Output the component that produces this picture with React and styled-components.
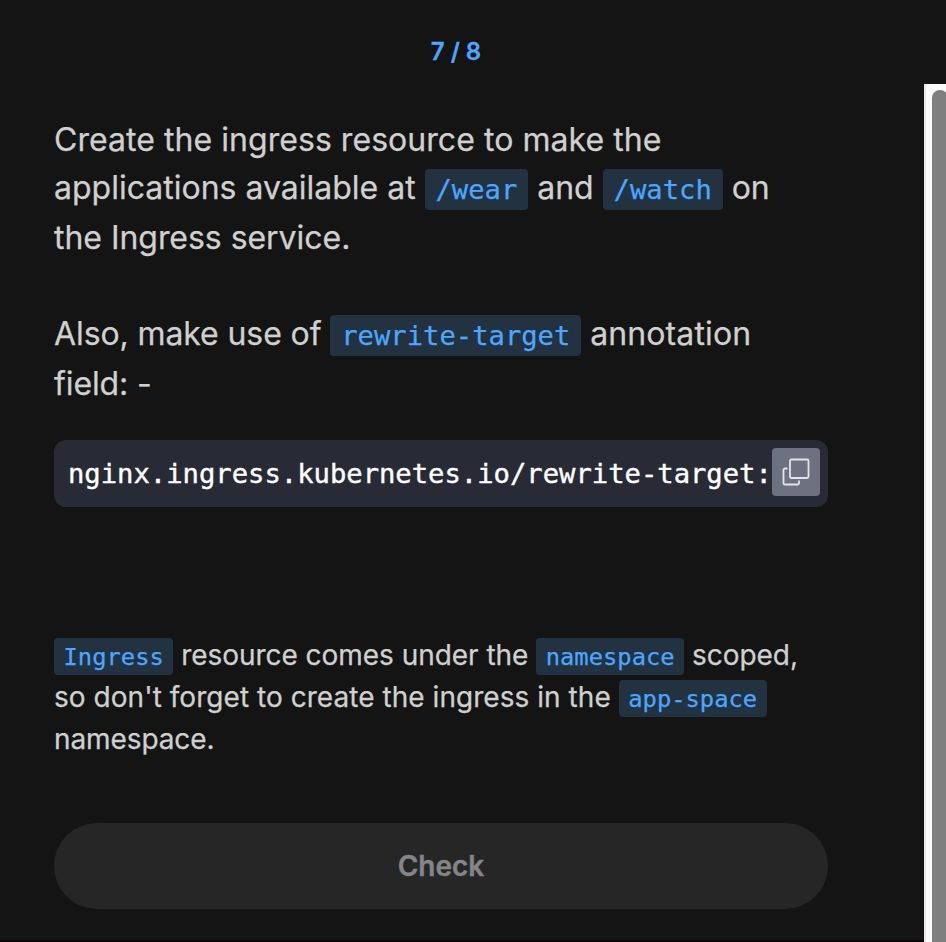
import React from "react";
import styled, { createGlobalStyle } from "styled-components";

const Global = createGlobalStyle`
  * { box-sizing: border-box; }
  body { margin: 0; background: #141414; overflow: hidden; }
`;

const Page = styled.div`
  display: flex;
  flex-direction: column;
  height: 942px;
  background: #141414;
  font-family: Inter, sans-serif;
  color: #d0d0d0;
`;

const Counter = styled.header`
  flex: 0 0 84px;
  padding: 37px 34px 0 0;
  text-align: center;
  font-size: 24px;
  line-height: 30px;
  font-weight: 600;
  color: #4da6ff;
  -webkit-text-stroke: 0.3px;
`;

const Body = styled.div`
  flex: 1;
  display: flex;
  min-height: 0;
`;

const Content = styled.main`
  flex: 1;
  display: flex;
  flex-direction: column;
  min-width: 0;
  padding: 32px 96px 0 54px;
  border-bottom: 2px solid #10060b;
`;

const Paragraph = styled.p`
  margin: 0 0 ${(p) => p.$gap}px;
  font-size: ${(p) => p.$size}px;
  white-space: nowrap;
  -webkit-text-stroke: 0.25px;
`;

const Line = styled.span`
  display: block;
  height: ${(p) => p.$h}px;
  line-height: 48px;
  letter-spacing: ${(p) => p.$tracking || 0}px;
`;

const Tracked = styled.span`
  letter-spacing: ${(p) => p.$tracking}px;
`;

const Code = styled.code`
  font-family: "DejaVu Sans Mono", monospace;
  font-size: 0.85em;
  letter-spacing: 0;
  line-height: 1;
  padding: ${(p) => (p.$small ? "5px 0.4em 4px" : "0.18em 0.4em")};
  border-radius: 4px;
  color: #4da6ff;
  background: #223240;
`;

const Snippet = styled.div`
  display: flex;
  align-items: center;
  justify-content: space-between;
  flex: 0 0 67px;
  padding: 0 8px 3px 14px;
  border-radius: 12px;
  background: #282a36;
  color: #fff;
  font-family: "DejaVu Sans Mono", monospace;
  font-size: 27.2px;
  white-space: nowrap;
  -webkit-text-stroke: 0.4px;
`;

const SnippetText = styled.span`
  padding-top: 2px;
`;

const CopyButton = styled.button`
  display: grid;
  place-items: center;
  flex: 0 0 48px;
  height: 48px;
  padding: 0;
  border: 0;
  border-radius: 4px;
  background: #6c7280;
`;

const Notes = styled.section`
  margin-top: 124px;
`;

const CheckButton = styled.button`
  flex: 0 0 86px;
  padding: 0;
  border: 0;
  border-radius: 43px;
  background: #262626;
  color: #858489;
  font: 600 28px Inter, sans-serif;
  -webkit-text-stroke: 0.4px;
`;

const Track = styled.div`
  flex: 0 0 22px;
  padding: 6px 0 0 6px;
  border-left: 2px solid #e8e8e8;
  background: #fafafa;
  overflow: hidden;
`;

const Thumb = styled.div`
  width: 16px;
  height: 900px;
  border-radius: 8px;
  background: #7f7f7f;
`;

export default function App() {
  return (
    <Page>
      <Global />
      <Counter>7 / 8</Counter>
      <Body>
        <Content>
          <Paragraph $size={32} $gap={48}>
            <Line $h={48} $tracking={0.05}>Create the ingress resource to make the</Line>
            <Line $h={50}>
              applications available at <Code>/wear</Code> and <Code>/watch</Code> on
            </Line>
            <Line $h={48} $tracking={-0.04}>the Ingress service.</Line>
          </Paragraph>
          <Paragraph $size={32} $gap={32}>
            <Line $h={50} $tracking={-0.1}>
              Also, make use of <Code>rewrite-target</Code>{" "}
              <Tracked $tracking={0.12}>annotation</Tracked>
            </Line>
            <Line $h={48} $tracking={-0.1}>field: -</Line>
          </Paragraph>
          <Snippet>
            <SnippetText>nginx.ingress.kubernetes.io/rewrite-target:</SnippetText>
            <CopyButton aria-label="Copy">
              <svg width="28" height="28" viewBox="0 0 28 28" fill="none" stroke="#e4e5e8" strokeWidth="1.8">
                <rect x="8" y="1.5" width="18.5" height="18.5" rx="1.5" />
                <path d="M5.5 10.5H3A1.5 1.5 0 0 0 1.5 12v13A1.5 1.5 0 0 0 3 26.5H15.5A1.5 1.5 0 0 0 17 25V22.5" />
              </svg>
            </CopyButton>
          </Snippet>
          <Notes>
            <Paragraph $size={28} $gap={66}>
              <Line $h={42} $tracking={-0.04}>
                <Code $small>Ingress</Code> resource comes under the <Code $small>namespace</Code> scoped,
              </Line>
              <Line $h={42} $tracking={0.045}>
                so don't forget to create the ingress in the <Code $small>app-space</Code>
              </Line>
              <Line $h={42} $tracking={-0.1}>namespace.</Line>
            </Paragraph>
          </Notes>
          <CheckButton>Check</CheckButton>
        </Content>
        <Track>
          <Thumb />
        </Track>
      </Body>
    </Page>
  );
}
